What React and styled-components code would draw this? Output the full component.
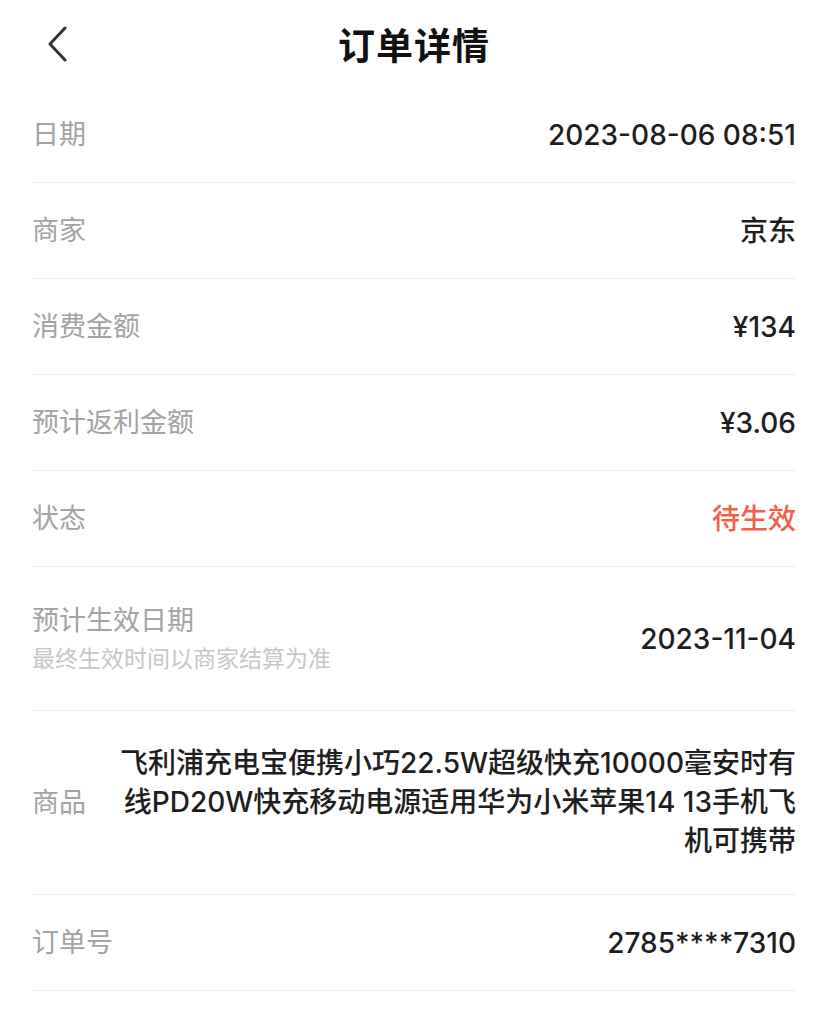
import React from 'react';
import styled, { createGlobalStyle } from 'styled-components';

const GlobalStyle = createGlobalStyle`
  html, body {
    margin: 0;
    padding: 0;
    background: #fff;
  }
  body {
    font-family: "Liberation Sans", "Noto Sans CJK SC", sans-serif;
    -webkit-font-smoothing: antialiased;
  }
`;

const Page = styled.div`
  width: 828px;
  min-height: 1035px;
  background: #fff;
`;

const Header = styled.header`
  position: relative;
  height: 87px;
  display: flex;
  align-items: center;
  justify-content: center;
`;

const BackButton = styled.button`
  position: absolute;
  left: 38px;
  top: 22px;
  width: 40px;
  height: 44px;
  padding: 0;
  border: 0;
  background: none;
  display: flex;
  align-items: center;
  justify-content: center;
`;

const Title = styled.h1`
  margin: 0;
  font-size: 37px;
  font-weight: 700;
  color: #111;
  letter-spacing: 1px;
`;

const List = styled.div`
  padding: 0 32px;
`;

const Row = styled.div`
  display: flex;
  align-items: center;
  justify-content: space-between;
  min-height: ${p => p.$height || 96}px;
  padding: ${p => p.$pad || 0}px 0;
  box-sizing: border-box;
  border-bottom: 1px solid #ececec;
`;

const LabelBox = styled.div`
  display: flex;
  flex-direction: column;
  flex-shrink: 0;
`;

const Label = styled.div`
  font-size: 27px;
  line-height: 40px;
  color: #a3a3a3;
`;

const SubLabel = styled.div`
  font-size: 23px;
  line-height: 36px;
  color: #c6c6c6;
`;

const Value = styled.div`
  font-family: Inter, "Noto Sans CJK SC", sans-serif;
  font-size: 28px;
  font-weight: 500;
  line-height: 40px;
  color: ${p => (p.$accent ? '#f2604c' : '#1e1e1e')};
  text-align: right;
`;

const ProductValue = styled.div`
  flex: 1;
  margin-left: 30px;
  font-family: Inter, "Noto Sans CJK SC", sans-serif;
  font-size: 28px;
  font-weight: 500;
  line-height: 39px;
  color: #1e1e1e;
  text-align: right;
  word-break: break-all;
`;

const BackIcon = () => (
  <svg width="22" height="36" viewBox="0 0 22 36" fill="none">
    <path d="M18 2 L3 18 L18 34" stroke="#333" strokeWidth="3" strokeLinecap="round" strokeLinejoin="round" />
  </svg>
);

const rows = [
  { label: '日期', value: '2023-08-06 08:51' },
  { label: '商家', value: '京东' },
  { label: '消费金额', value: '¥134' },
  { label: '预计返利金额', value: '¥3.06' },
  { label: '状态', value: '待生效', accent: true },
];

const App = () => (
  <Page>
    <GlobalStyle />
    <Header>
      <BackButton aria-label="返回">
        <BackIcon />
      </BackButton>
      <Title>订单详情</Title>
    </Header>
    <List>
      {rows.map(r => (
        <Row key={r.label}>
          <Label>{r.label}</Label>
          <Value $accent={r.accent}>{r.value}</Value>
        </Row>
      ))}
      <Row $height={144} $pad={32}>
        <LabelBox>
          <Label>预计生效日期</Label>
          <SubLabel>最终生效时间以商家结算为准</SubLabel>
        </LabelBox>
        <Value>2023-11-04</Value>
      </Row>
      <Row $height={184} $pad={33}>
        <Label>商品</Label>
        <ProductValue>
          飞利浦充电宝便携小巧22.5W超级快充10000毫安时有线PD20W快充移动电源适用华为小米苹果14 13手机飞机可携带
        </ProductValue>
      </Row>
      <Row>
        <Label>订单号</Label>
        <Value>2785****7310</Value>
      </Row>
    </List>
  </Page>
);

export default App;
